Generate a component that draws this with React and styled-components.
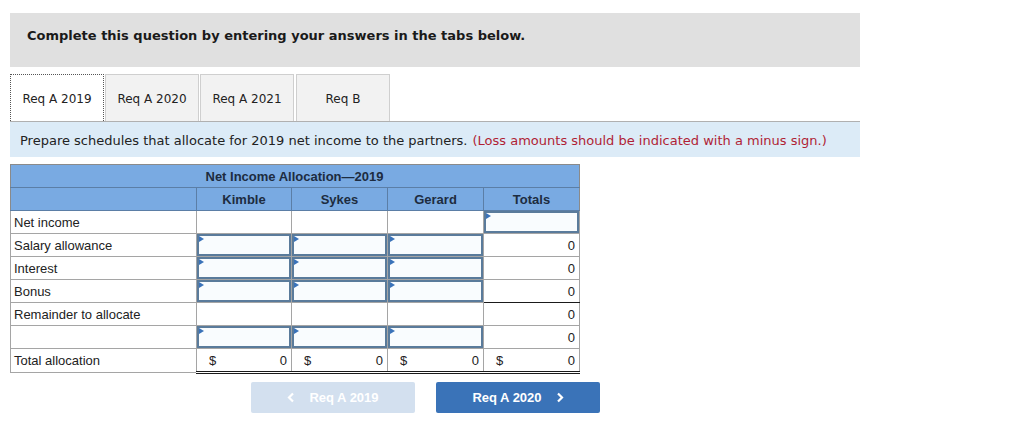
import styled, { createGlobalStyle } from 'styled-components';

const GlobalStyle = createGlobalStyle`
  body {
    margin: 0;
    background: #ffffff;
    font-family: "DejaVu Sans", Verdana, sans-serif;
  }
`;

const Page = styled.div`
  padding: 13px 0 0 10px;
  width: 850px;
`;

const Banner = styled.div`
  height: 54px;
  box-sizing: border-box;
  padding: 15px 17px 0;
  background: #e0e0e0;
  font-size: 13px;
  line-height: 16px;
  font-weight: bold;
  color: #1a1a1a;
`;

const TabBar = styled.div`
  display: flex;
  gap: 1px;
  margin-top: 7px;
`;

const Tab = styled.div`
  width: 94px;
  height: 47px;
  box-sizing: border-box;
  padding-top: 2px;
  display: flex;
  align-items: center;
  justify-content: center;
  font-size: 12px;
  color: #222;
  background: ${(p) => (p.$active ? '#ffffff' : '#f2f2f2')};
  border: ${(p) => (p.$active ? '1px dotted #555' : '1px solid #cfcfcf')};
  border-bottom: none;
`;

const Instructions = styled.div`
  height: 36px;
  box-sizing: border-box;
  border-top: 1px solid #b0b0b0;
  background: #dcebf7;
  padding: 1px 10px 0;
  display: flex;
  align-items: center;
  font-size: 13px;
  color: #222;
  white-space: nowrap;
`;

const Note = styled.span`
  color: #b01f35;
  margin-left: 5px;
`;

const Table = styled.table`
  margin-top: 7px;
  border-collapse: collapse;
  font-family: "Liberation Sans", Arial, sans-serif;
  font-size: 13px;
  color: #222;
  table-layout: fixed;
  width: 570px;
  border: 1px solid #8a8a8a;
`;

const HeadCell = styled.th`
  height: 22px;
  padding: 0;
  background: #79aae2;
  color: #1d2c40;
  font-weight: bold;
  text-align: ${(p) => p.$align || 'center'};
  padding-left: ${(p) => (p.$align === 'left' ? '9px' : '0')};
  border-left: ${(p) => (p.$divider ? '1px solid #5b7ea6' : 'none')};
  border-bottom: 1px solid #5b7ea6;
`;

const Cell = styled.td`
  height: 22px;
  padding: 0;
  border: 1px solid #a5a5a5;
  border-top: ${(p) => (p.$sumTop ? '1px solid #1a1a1a' : '1px solid #a5a5a5')};
  border-bottom: ${(p) =>
    p.$double ? '3px double #1a1a1a' : p.$sumBottom ? '1px solid #1a1a1a' : '1px solid #a5a5a5'};
  vertical-align: middle;
`;

const Label = styled(Cell)`
  padding-left: 3px;
  white-space: nowrap;
`;

const Amount = styled.div`
  display: flex;
  justify-content: ${(p) => (p.$dollar ? 'space-between' : 'flex-end')};
  padding: 0 4px 0 12px;
`;

const InputBox = styled.div`
  position: relative;
  height: 22px;
  box-sizing: border-box;
  border: 2px solid #5a7b9b;
  background: #f9fcfe;

  &::before {
    content: '';
    position: absolute;
    top: 0;
    left: 0;
    border-top: 3px solid transparent;
    border-bottom: 3px solid transparent;
    border-left: 5px solid #3b73b9;
  }
`;

const Nav = styled.div`
  display: flex;
  gap: 21px;
  margin: 8px 0 0 241px;
`;

const NavButton = styled.button`
  width: 164px;
  height: 31px;
  border: none;
  border-radius: 2px;
  display: flex;
  align-items: center;
  justify-content: center;
  gap: 14px;
  font-family: "Liberation Sans", Arial, sans-serif;
  font-size: 13px;
  font-weight: bold;
  color: #ffffff;
  background: ${(p) => (p.$disabled ? '#d3e0ef' : '#3a73b8')};
  padding: 0;
`;

const Chevron = ({ dir }) => (
  <svg width="8" height="11" viewBox="0 0 8 11">
    <path
      d={dir === 'left' ? 'M6 1.5 L2 5.5 L6 9.5' : 'M2 1.5 L6 5.5 L2 9.5'}
      fill="none"
      stroke="#ffffff"
      strokeWidth="2.2"
    />
  </svg>
);

const rows = [
  { label: 'Net income', inputs: [false, false, false], total: 'input' },
  { label: 'Salary allowance', inputs: [true, true, true], total: '0' },
  { label: 'Interest', inputs: [true, true, true], total: '0' },
  { label: 'Bonus', inputs: [true, true, true], total: '0', sumBottom: true },
  { label: 'Remainder to allocate', inputs: [false, false, false], total: '0' },
  { label: '', inputs: [true, true, true], total: '0' },
];

const App = () => (
  <Page>
    <GlobalStyle />
    <Banner>Complete this question by entering your answers in the tabs below.</Banner>
    <TabBar>
      <Tab $active>Req A 2019</Tab>
      <Tab>Req A 2020</Tab>
      <Tab>Req A 2021</Tab>
      <Tab style={{ marginLeft: '1px' }}>Req B</Tab>
    </TabBar>
    <Instructions>
      Prepare schedules that allocate for 2019 net income to the partners.
      <Note>(Loss amounts should be indicated with a minus sign.)</Note>
    </Instructions>
    <Table>
      <colgroup>
        <col style={{ width: '186px' }} />
        <col style={{ width: '95px' }} />
        <col style={{ width: '96px' }} />
        <col style={{ width: '96px' }} />
        <col style={{ width: '96px' }} />
      </colgroup>
      <thead>
        <tr>
          <HeadCell />
          <HeadCell colSpan={3} $align="left">
            Net Income Allocation—2019
          </HeadCell>
          <HeadCell />
        </tr>
        <tr>
          <HeadCell />
          <HeadCell $divider>Kimble</HeadCell>
          <HeadCell $divider>Sykes</HeadCell>
          <HeadCell $divider>Gerard</HeadCell>
          <HeadCell $divider>Totals</HeadCell>
        </tr>
      </thead>
      <tbody>
        {rows.map((row, i) => (
          <tr key={i}>
            <Label>{row.label}</Label>
            {row.inputs.map((isInput, j) => (
              <Cell key={j}>{isInput ? <InputBox /> : null}</Cell>
            ))}
            <Cell $sumBottom={row.sumBottom}>
              {row.total === 'input' ? <InputBox /> : <Amount>{row.total}</Amount>}
            </Cell>
          </tr>
        ))}
        <tr>
          <Label>Total allocation</Label>
          {[0, 1, 2, 3].map((j) => (
            <Cell key={j} $sumTop $double>
              <Amount $dollar>
                <span>$</span>
                <span>0</span>
              </Amount>
            </Cell>
          ))}
        </tr>
      </tbody>
    </Table>
    <Nav>
      <NavButton $disabled>
        <Chevron dir="left" />
        Req A 2019
      </NavButton>
      <NavButton>
        Req A 2020
        <Chevron dir="right" />
      </NavButton>
    </Nav>
  </Page>
);

export default App;
